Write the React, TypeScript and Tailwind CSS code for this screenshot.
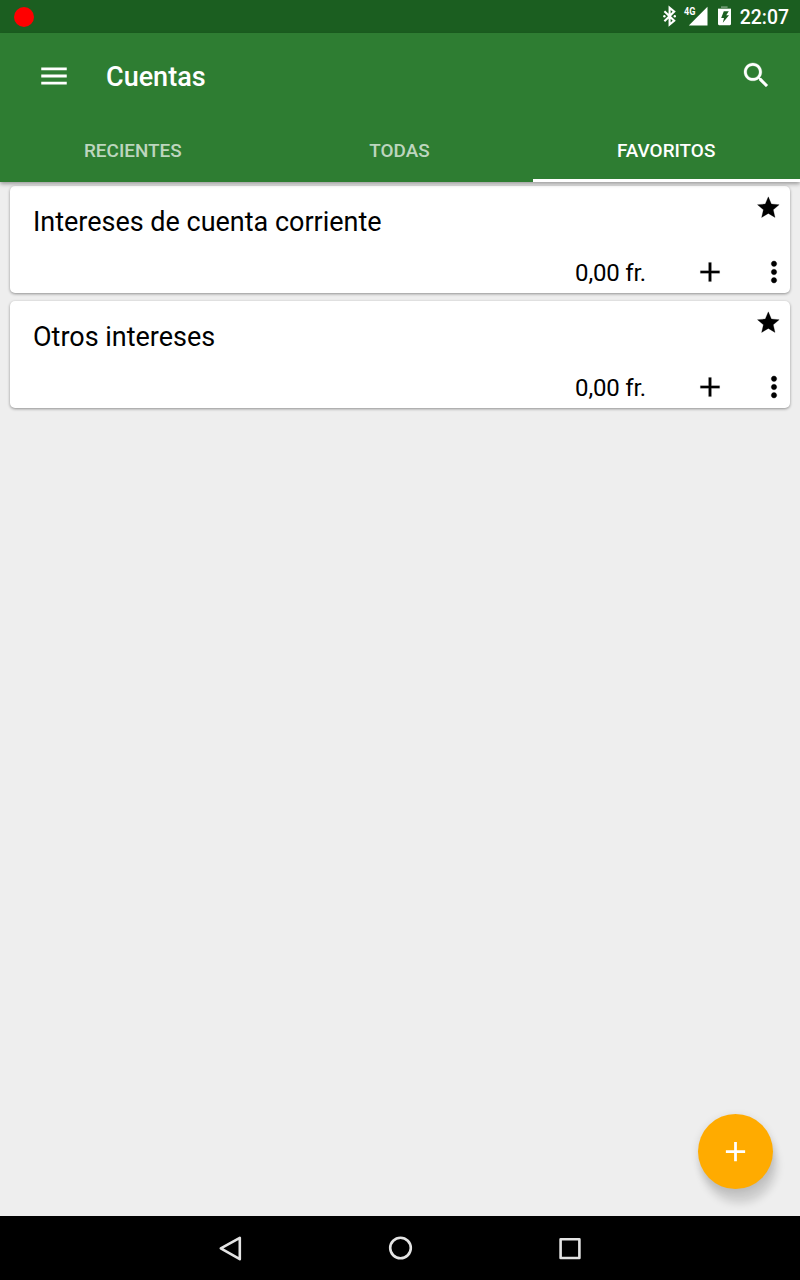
import React from "react";

const PLUS = "M19 13h-6v6h-2v-6H5v-2h6V5h2v6h6v2z";

const TIGHT = "0.35 0.35 23.3 23.3";

function Icon({ d, className, viewBox = "0 0 24 24" }: { d: string; className: string; viewBox?: string }) {
  return (
    <svg viewBox={viewBox} className={`block shrink-0 ${className}`} fill="currentColor" aria-hidden="true">
      <path d={d} />
    </svg>
  );
}

function StatusBar() {
  return (
    <div className="flex h-[33px] items-center justify-between bg-[#1b5e20] pl-[13.5px] pr-[11px] text-white">
      <div className="mt-[0.5px] size-[20.5px] rounded-full bg-[#ff0000]" />
      <svg viewBox="0 0 76 33" className="ml-auto h-[33px] w-[76px]" aria-hidden="true">
        <path
          d="M0.8 11.2 10.6 20.8 6 24.6V7.8L10.6 11.6 0.8 21.2"
          transform="translate(.6 0)"
          fill="none"
          stroke="#fff"
          strokeWidth="2.1"
        />
        <circle cx="1.4" cy="16.3" r="1.2" fill="#fff" />
        <circle cx="11.8" cy="16.3" r="1.2" fill="#fff" />
        <text x="21" y="15" fontSize="10.2" fontWeight="700" fontFamily="Roboto, sans-serif" textLength="11.4" lengthAdjust="spacingAndGlyphs" fill="#fff">
          4G
        </text>
        <path d="M44.5 6.8V25.6H25.8Z" fill="#fff" />
        <path d="M58 8V6.2H64.6V8H68V9H55V8Z" fill="#fff" opacity=".35" />
        <path
          fillRule="evenodd"
          d="M55 9H68V24.1Q68 25.2 66.9 25.2H56.1Q55 25.2 55 24.1ZM60.8 11.3 58.2 17.9H61L59.8 22.8 66 15.2H63.2L65.8 11.3Z"
          fill="#fff"
        />
      </svg>
      <span className="ml-[1px] pt-[2px] text-[19.4px] font-medium leading-[31px]">22:07</span>
    </div>
  );
}

function Tab({ label, active = false }: { label: string; active?: boolean }) {
  return (
    <button
      className={`flex h-16 flex-1 items-center justify-center border-b-[3px] pr-px pt-[5px] text-[18.9px] font-medium ${
        active ? "border-white text-white" : "border-transparent text-white/70"
      }`}
    >
      {label}
    </button>
  );
}

function AppBar() {
  return (
    <header className="relative z-10 flex h-[149px] flex-col justify-between bg-[#2e7d32] text-white shadow-[0_2px_4px_rgba(0,0,0,0.35)]">
      <div className="flex h-[85px] items-center pl-[37px] pr-[28px]">
        <Icon d="M3 18h18v-2H3v2zm0-5h18v-2H3v2zm0-7v2h18V6H3z" className="size-[34px]" />
        <h1 className="ml-[35px] mt-[2px] flex-1 text-[27px] font-medium leading-8">Cuentas</h1>
        <Icon
          d="M15.5 14h-.79l-.28-.27C15.41 12.59 16 11.11 16 9.5 16 5.91 13.09 3 9.5 3S3 5.91 3 9.5 5.91 16 9.5 16c1.61 0 3.09-.59 4.23-1.57l.27.28v.79l5 4.99L20.49 19l-4.99-5zm-6 0C7.01 14 5 11.99 5 9.5S7.01 5 9.5 5 14 7.01 14 9.5 11.99 14 9.5 14z"
          viewBox="0.1 0.1 23.3 23.3"
          className="-mt-[2px] size-8 stroke-current stroke-[0.2]"
        />
      </div>
      <nav className="flex">
        <Tab label="RECIENTES" />
        <Tab label="TODAS" />
        <Tab label="FAVORITOS" active />
      </nav>
    </header>
  );
}

function AccountCard({ name, amount }: { name: string; amount: string }) {
  return (
    <article className="flex h-[107px] flex-col justify-between rounded-[5px] bg-white text-black shadow-[0_1px_3px_rgba(0,0,0,0.4)]">
      <div className="flex items-start justify-between pl-[23px] pr-[9px]">
        <h2 className="pt-5 text-[26.98px] leading-8">{name}</h2>
        <Icon
          d="M12 17.27 18.18 21l-1.64-7.03L22 9.24l-7.19-.61L12 2 9.19 8.63 2 9.24l5.46 4.73L5.82 21z"
          viewBox="-0.3 0.3 24 24"
          className="mt-[9px] size-[26px] stroke-current stroke-[0.25]"
        />
      </div>
      <div className="flex h-[43px] items-center justify-end">
        <span className="pt-[2px] text-[24px] leading-8 tracking-[-0.2px]">{amount}</span>
        <Icon d={PLUS} viewBox={TIGHT} className="mt-px ml-12 size-8 stroke-current stroke-[0.1]" />
        <Icon
          d="M12 8c1.1 0 2-.9 2-2s-.9-2-2-2-2 .9-2 2 .9 2 2 2zm0 2c-1.1 0-2 .9-2 2s.9 2 2 2 2-.9 2-2-.9-2-2-2zm0 6c-1.1 0-2 .9-2 2s.9 2 2 2 2-.9 2-2-.9-2-2-2z"
          viewBox={TIGHT}
          className="ml-8 mt-px size-8 stroke-current stroke-[0.25]"
        />
      </div>
    </article>
  );
}

function NavigationBar() {
  return (
    <footer className="flex h-16 items-center justify-center gap-[138px] bg-black">
      <svg viewBox="0 0 32 32" className="size-8" fill="none" stroke="#e4e4e4" strokeWidth="2.6" strokeLinejoin="round">
        <path d="M25.8 5.8V27.2L6.8 16.4Z" />
      </svg>
      <svg viewBox="0 0 32 32" className="size-8" fill="none" stroke="#e4e4e4" strokeWidth="2.6">
        <circle cx="16.5" cy="16" r="10.3" />
      </svg>
      <svg viewBox="0 0 32 32" className="size-8" fill="none" stroke="#e4e4e4" strokeWidth="2.6" strokeLinejoin="round">
        <path d="M6.6 7.2H25.4V26H6.6Z" />
      </svg>
    </footer>
  );
}

export default function App() {
  return (
    <div className="flex h-[1280px] w-[800px] flex-col overflow-hidden bg-[#eeeeee] font-['Roboto',sans-serif]">
      <StatusBar />
      <AppBar />
      <main className="relative flex flex-1 flex-col gap-2 px-[10px] pt-1">
        <AccountCard name="Intereses de cuenta corriente" amount="0,00 fr." />
        <AccountCard name="Otros intereses" amount="0,00 fr." />
        <button className="absolute bottom-[27px] right-[27px] flex size-[75px] items-center justify-center rounded-full bg-[#ffab00] text-white shadow-[4px_14px_9px_rgba(0,0,0,0.14),0_2px_8px_rgba(0,0,0,0.12)]">
          <Icon d={PLUS} className="size-[33px]" />
        </button>
      </main>
      <NavigationBar />
    </div>
  );
}
